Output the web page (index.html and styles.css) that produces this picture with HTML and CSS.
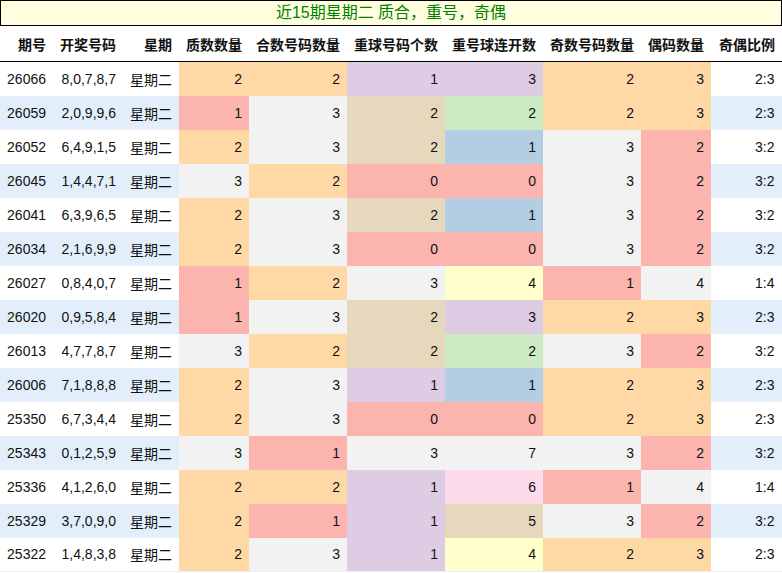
FILE: index.html
```html
<!DOCTYPE html>
<html lang="zh">
<head>
<meta charset="utf-8">
<title>近15期星期二 质合，重号，奇偶</title>
<link rel="stylesheet" href="styles.css">
</head>
<body>
<div class="title">近15期星期二 质合，重号，奇偶</div>
<table class="grid">
<colgroup>
<col class="w53"><col class="w70"><col class="w56"><col class="w70"><col class="w98"><col class="w98"><col class="w98"><col class="w98"><col class="w70"><col class="w71">
</colgroup>
<thead>
<tr><th>期号</th><th>开奖号码</th><th>星期</th><th>质数数量</th><th>合数号码数量</th><th>重球号码个数</th><th>重号球连开数</th><th>奇数号码数量</th><th>偶码数量</th><th>奇偶比例</th></tr>
</thead>
<tbody>
<tr><td>26066</td><td>8,0,7,8,7</td><td>星期二</td><td class="or">2</td><td class="or">2</td><td class="pu">1</td><td class="pu">3</td><td class="or">2</td><td class="or">3</td><td>2:3</td></tr>
<tr><td>26059</td><td>2,0,9,9,6</td><td>星期二</td><td class="re">1</td><td class="gr">3</td><td class="ta">2</td><td class="gn">2</td><td class="or">2</td><td class="or">3</td><td>2:3</td></tr>
<tr><td>26052</td><td>6,4,9,1,5</td><td>星期二</td><td class="or">2</td><td class="gr">3</td><td class="ta">2</td><td class="bl">1</td><td class="gr">3</td><td class="re">2</td><td>3:2</td></tr>
<tr><td>26045</td><td>1,4,4,7,1</td><td>星期二</td><td class="gr">3</td><td class="or">2</td><td class="re">0</td><td class="re">0</td><td class="gr">3</td><td class="re">2</td><td>3:2</td></tr>
<tr><td>26041</td><td>6,3,9,6,5</td><td>星期二</td><td class="or">2</td><td class="gr">3</td><td class="ta">2</td><td class="bl">1</td><td class="gr">3</td><td class="re">2</td><td>3:2</td></tr>
<tr><td>26034</td><td>2,1,6,9,9</td><td>星期二</td><td class="or">2</td><td class="gr">3</td><td class="re">0</td><td class="re">0</td><td class="gr">3</td><td class="re">2</td><td>3:2</td></tr>
<tr><td>26027</td><td>0,8,4,0,7</td><td>星期二</td><td class="re">1</td><td class="or">2</td><td class="gr">3</td><td class="ye">4</td><td class="re">1</td><td class="gr">4</td><td>1:4</td></tr>
<tr><td>26020</td><td>0,9,5,8,4</td><td>星期二</td><td class="re">1</td><td class="gr">3</td><td class="ta">2</td><td class="pu">3</td><td class="or">2</td><td class="or">3</td><td>2:3</td></tr>
<tr><td>26013</td><td>4,7,7,8,7</td><td>星期二</td><td class="gr">3</td><td class="or">2</td><td class="ta">2</td><td class="gn">2</td><td class="gr">3</td><td class="re">2</td><td>3:2</td></tr>
<tr><td>26006</td><td>7,1,8,8,8</td><td>星期二</td><td class="or">2</td><td class="gr">3</td><td class="pu">1</td><td class="bl">1</td><td class="or">2</td><td class="or">3</td><td>2:3</td></tr>
<tr><td>25350</td><td>6,7,3,4,4</td><td>星期二</td><td class="or">2</td><td class="gr">3</td><td class="re">0</td><td class="re">0</td><td class="or">2</td><td class="or">3</td><td>2:3</td></tr>
<tr><td>25343</td><td>0,1,2,5,9</td><td>星期二</td><td class="gr">3</td><td class="re">1</td><td class="gr">3</td><td class="gr">7</td><td class="gr">3</td><td class="re">2</td><td>3:2</td></tr>
<tr><td>25336</td><td>4,1,2,6,0</td><td>星期二</td><td class="or">2</td><td class="or">2</td><td class="pu">1</td><td class="pk">6</td><td class="re">1</td><td class="gr">4</td><td>1:4</td></tr>
<tr><td>25329</td><td>3,7,0,9,0</td><td>星期二</td><td class="or">2</td><td class="re">1</td><td class="pu">1</td><td class="ta">5</td><td class="gr">3</td><td class="re">2</td><td>3:2</td></tr>
<tr><td>25322</td><td>1,4,8,3,8</td><td>星期二</td><td class="or">2</td><td class="gr">3</td><td class="pu">1</td><td class="ye">4</td><td class="or">2</td><td class="or">3</td><td>2:3</td></tr>
</tbody>
</table>
</body>
</html>
```
FILE: styles.css
```css
html, body {
  margin: 0;
  padding: 0;
  background: #ffffff;
}
body {
  font-family: "Liberation Sans", Arial, "Noto Sans CJK SC", sans-serif;
  font-size: 14px;
  color: #111111;
}
.title {
  box-sizing: border-box;
  width: 782px;
  height: 26px;
  border: 1px solid #000000;
  background: #ffffe0;
  color: #008000;
  font-family: "Liberation Sans", Arial, "Noto Sans CJK SC", sans-serif;
  font-size: 16px;
  line-height: 24px;
  text-align: center;
}
.grid {
  width: 782px;
  table-layout: fixed;
  border-collapse: collapse;
  border-spacing: 0;
}
.w53 { width: 53px; }
.w56 { width: 56px; }
.w70 { width: 70px; }
.w98 { width: 98px; }
.w71 { width: 71px; }
.grid th {
  height: 35px;
  padding: 0 7px 0 0;
  font-weight: bold;
  text-align: right;
  border-bottom: 1px solid #000000;
  white-space: nowrap;
  color: #111111;
}
.grid td {
  height: 34px;
  padding: 0 7px 0 0;
  text-align: right;
  white-space: nowrap;
  box-sizing: border-box;
}
.grid tbody tr:nth-child(even) td { background: #e2effa; }
.grid tbody tr:last-child td { border-bottom: 1px solid #eeeeee; }
.grid tbody tr td:last-child { border-right: 1px solid #eeeeee; }
.grid tbody tr td.or { background: #fed9a6; }
.grid tbody tr td.re { background: #fbb4ae; }
.grid tbody tr td.gr { background: #f2f2f2; }
.grid tbody tr td.pu { background: #decbe4; }
.grid tbody tr td.ta { background: #e5d8bd; }
.grid tbody tr td.gn { background: #ccebc5; }
.grid tbody tr td.bl { background: #b3cde3; }
.grid tbody tr td.ye { background: #ffffcc; }
.grid tbody tr td.pk { background: #fddaec; }
```
